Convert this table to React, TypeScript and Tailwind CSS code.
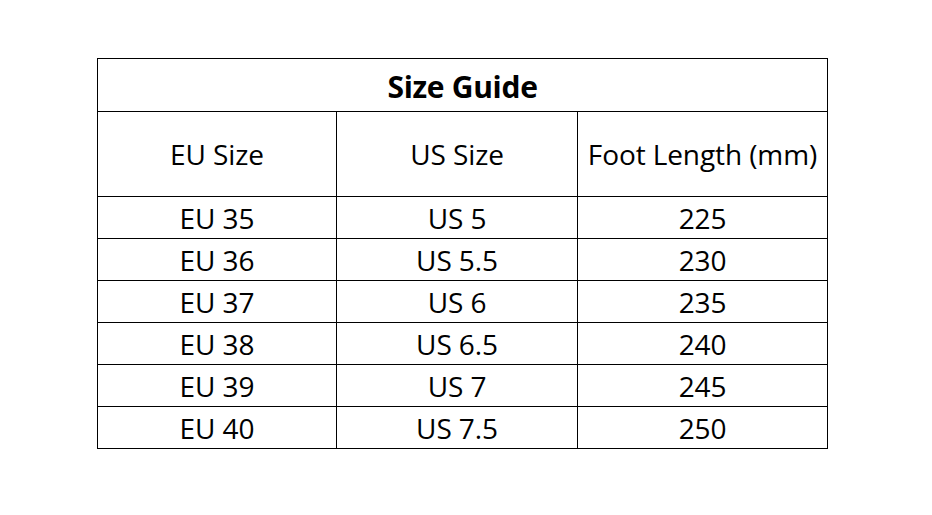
const rows: [string, string, string][] = [
  ['EU 35', 'US 5', '225'],
  ['EU 36', 'US 5.5', '230'],
  ['EU 37', 'US 6', '235'],
  ['EU 38', 'US 6.5', '240'],
  ['EU 39', 'US 7', '245'],
  ['EU 40', 'US 7.5', '250'],
];

const cols = ['w-[239px]', 'w-[241px]', 'w-[250px]'];

export default function App() {
  return (
    <div className="min-h-[515px] w-[932px] bg-white pl-[97px] pt-[58px] font-['Open_Sans',sans-serif] text-black">
      <div className="w-[731px] border-l border-t border-black">
        {/* title */}
        <div className="flex h-[53px] items-center justify-center border-b border-r border-black pt-[2px] text-[30px] font-bold tracking-[-0.3px]">
          Size Guide
        </div>
        {/* header */}
        <div className="flex h-[85px]">
          {['EU Size', 'US Size', 'Foot Length (mm)'].map((h, i) => (
            <div
              key={h}
              className={`${cols[i]} flex items-center justify-center border-b border-r border-black text-[28px] tracking-[-0.1px]`}
            >
              {h}
            </div>
          ))}
        </div>
        {rows.map((r) => (
          <div key={r[0]} className="flex h-[42px]">
            {r.map((c, i) => (
              <div
                key={i}
                className={`${cols[i]} flex items-center justify-center border-b border-r border-black text-[28px] tracking-[-0.1px]`}
              >
                {c}
              </div>
            ))}
          </div>
        ))}
      </div>
    </div>
  );
}
